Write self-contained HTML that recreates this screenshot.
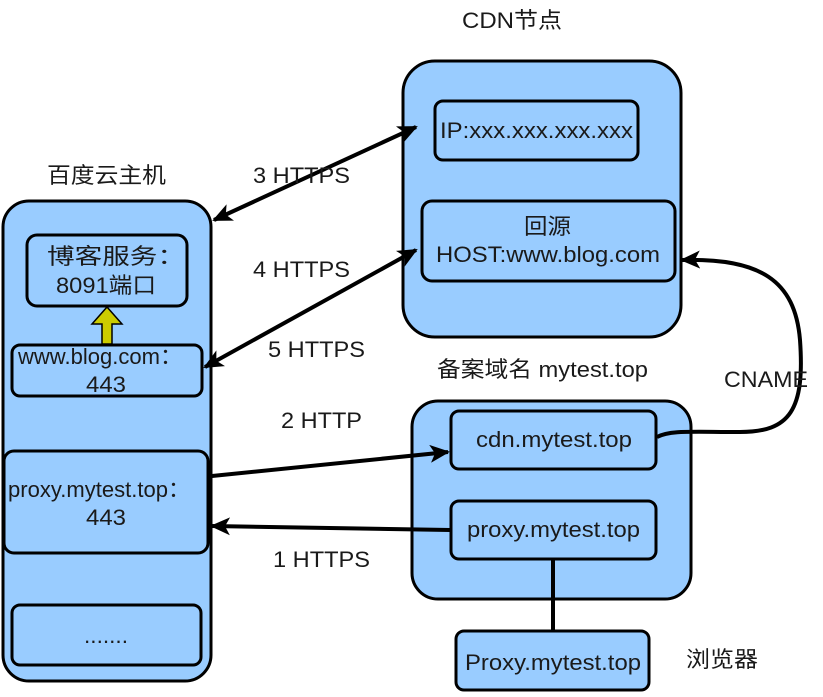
<!DOCTYPE html>
<html><head><meta charset="utf-8"><style>
html,body{margin:0;padding:0;background:#fff;}
svg{display:block}
text{font-family:"Liberation Sans","Noto Sans CJK SC",sans-serif;font-size:22px;fill:#1a1a1a;}
</style></head><body>
<svg width="823" height="697" viewBox="0 0 823 697" xmlns="http://www.w3.org/2000/svg">
<defs>
<marker id="ahb" markerWidth="20" markerHeight="18" refX="18" refY="9" orient="auto-start-reverse" markerUnits="userSpaceOnUse" viewBox="0 0 20 18">
<path d="M0,0 L20,9 L0,18 L5,9 Z" fill="#000"/></marker>
</defs>
<g stroke="#000" stroke-width="3" fill="#99ccff">
<rect x="3" y="201" width="208" height="480" rx="26"/>
<rect x="27" y="235" width="160" height="71" rx="10"/>
<rect x="12" y="345" width="190" height="51" rx="8"/>
<rect x="4" y="451" width="204" height="102" rx="10"/>
<rect x="12" y="605" width="189" height="60" rx="8"/>
<rect x="403" y="61" width="278" height="276" rx="32"/>
<rect x="435" y="101" width="203" height="59" rx="8"/>
<rect x="422" y="201" width="253" height="80" rx="10"/>
<rect x="412" y="401" width="279" height="198" rx="26"/>
<rect x="451" y="411" width="205" height="58" rx="8"/>
<rect x="451" y="501" width="205" height="58" rx="8"/>
<rect x="456" y="631" width="193" height="59" rx="8"/>
</g>
<path d="M102,344 L102,324 L92,324 L107,307 L122,324 L112,324 L112,344 Z" fill="#cccc00" stroke="#000" stroke-width="1.5"/>
<g stroke="#000" stroke-width="4" fill="none">
<line x1="553" y1="560" x2="553" y2="630"/>
<line x1="214" y1="220" x2="416" y2="127" marker-start="url(#ahb)" marker-end="url(#ahb)"/>
<line x1="205" y1="367" x2="416" y2="250" marker-start="url(#ahb)" marker-end="url(#ahb)"/>
<line x1="212" y1="476" x2="448" y2="452" marker-end="url(#ahb)"/>
<line x1="450" y1="530" x2="212" y2="526" marker-end="url(#ahb)"/>
<path d="M657,437 C670,430 690,432 740,432 C790,432 805,410 800,340 C795,280 760,258 682,260" marker-end="url(#ahb)"/>
</g>
<g>
<text x="462" y="28" textLength="100" lengthAdjust="spacingAndGlyphs">CDN节点</text>
<text x="47" y="183" textLength="119" lengthAdjust="spacingAndGlyphs">百度云主机</text>
<text x="253" y="183" textLength="97" lengthAdjust="spacingAndGlyphs">3 HTTPS</text>
<text x="253" y="277" textLength="97" lengthAdjust="spacingAndGlyphs">4 HTTPS</text>
<text x="268" y="357" textLength="97" lengthAdjust="spacingAndGlyphs">5 HTTPS</text>
<text x="281" y="428" textLength="81" lengthAdjust="spacingAndGlyphs">2 HTTP</text>
<text x="273" y="567" textLength="97" lengthAdjust="spacingAndGlyphs">1 HTTPS</text>
<text x="437" y="377" textLength="211" lengthAdjust="spacingAndGlyphs">备案域名 mytest.top</text>
<text x="724" y="387" textLength="84" lengthAdjust="spacingAndGlyphs">CNAME</text>
<text x="686" y="667" textLength="72" lengthAdjust="spacingAndGlyphs">浏览器</text>
<text x="47" y="264" textLength="138" lengthAdjust="spacingAndGlyphs">博客服务：</text>
<text x="56" y="293" textLength="100" lengthAdjust="spacingAndGlyphs">8091端口</text>
<text x="18" y="364" textLength="164" lengthAdjust="spacingAndGlyphs">www.blog.com：</text>
<text x="86" y="392" textLength="40" lengthAdjust="spacingAndGlyphs">443</text>
<text x="8" y="497" textLength="182" lengthAdjust="spacingAndGlyphs">proxy.mytest.top：</text>
<text x="86" y="525" textLength="40" lengthAdjust="spacingAndGlyphs">443</text>
<text x="84" y="643" textLength="44" lengthAdjust="spacingAndGlyphs">.......</text>
<text x="440" y="138" textLength="193" lengthAdjust="spacingAndGlyphs">IP:xxx.xxx.xxx.xxx</text>
<text x="524" y="234" textLength="47" lengthAdjust="spacingAndGlyphs">回源</text>
<text x="436" y="262" textLength="224" lengthAdjust="spacingAndGlyphs">HOST:www.blog.com</text>
<text x="476" y="447" textLength="156" lengthAdjust="spacingAndGlyphs">cdn.mytest.top</text>
<text x="467" y="537" textLength="173" lengthAdjust="spacingAndGlyphs">proxy.mytest.top</text>
<text x="465" y="670" textLength="176" lengthAdjust="spacingAndGlyphs">Proxy.mytest.top</text>
</g>
</svg>
</body></html>
